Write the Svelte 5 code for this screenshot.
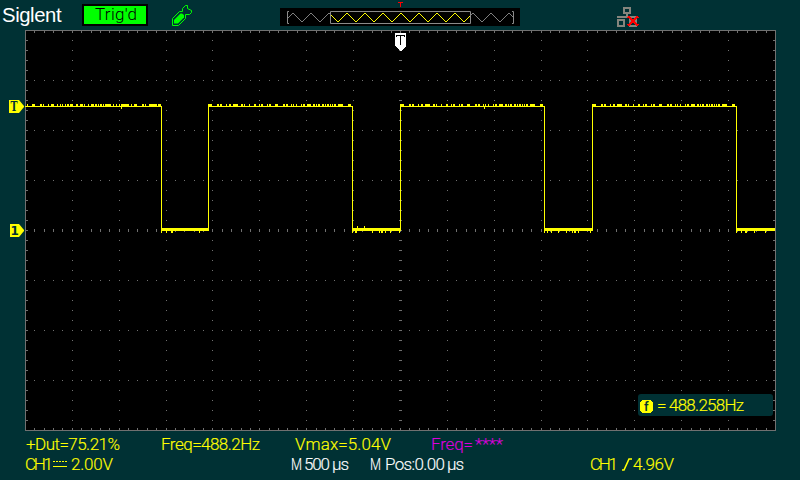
<script>
  const columns = 80;
  const at = (i) => Math.ceil(25 + i * 9.375 - 0.5) - 25;

  let dots = '';
  let ticks = '';
  const dot = (x, y) => `M${x} ${y}h1v1h-1z`;
  for (let i = 1; i < columns; i++) {
    const x = at(i);
    ticks += `M${x} 1h1v2h-1zM${x} 398h1v2h-1zM${x} 199h1v3h-1z`;
    for (let y = 50; y < 400; y += 50) if (y !== 200) dots += dot(x, y);
  }
  for (let y = 10; y < 400; y += 10) {
    ticks += `M1 ${y}h2v1h-2zM748 ${y}h2v1h-2zM374 ${y}h3v1h-3z`;
    for (let k = 1; k < 16; k++) dots += dot(at(k * 5), y);
  }

  // noise runs are [offset, length] pairs relative to the plot's left edge
  const first = [[2,1],[7,3],[15,2],[18,1],[23,1],[26,3],[32,1],[35,1],[37,1],[40,1],[42,2],[45,3],[51,2],[55,3],[59,1],[63,1],[66,3],[70,2],[73,1],[75,2],[78,1],[80,6],[88,1],[91,1],[94,1],[96,8],[106,1],[109,3],[117,2],[120,1],[124,8],[133,3]];
  const pulse = [[0,4],[9,2],[12,2],[18,1],[21,2],[25,5],[33,2],[36,1],[41,1],[46,2],[51,1],[53,2],[59,1],[61,2],[67,3],[75,2],[78,2],[83,1],[85,1],[88,1],[93,1],[95,2],[99,4],[105,2],[108,1],[110,2],[114,2],[117,1],[119,2],[122,1],[124,1],[126,2],[130,5],[140,3]];
  const noise = [...first, ...[183, 375, 567].flatMap((s) => pulse.map(([x, w]) => [s + x, w]))];
  const dips = [[136,1],[141,1],[146,2],[174,1],[327,1],[330,2],[347,1],[354,1],[356,2],[360,1],[365,1],[374,1],[519,1],[522,1],[526,1],[533,1],[541,1],[547,1],[549,2],[553,1],[565,1],[711,1],[716,1],[720,2],[729,1],[740,1]];
  const trace =
    [[0,137],[183,145],[375,145],[567,145]].map(([x, w]) => `M${x} 76h${w}v1h-${w}z`).join('') +
    [136,183,327,375,519,567,711].map((x) => `M${x} 76h1v124h-1z`).join('') +
    [[136,48],[327,49],[519,49],[711,39]].map(([x, w]) => `M${x} 198h${w}v3h-${w}z`).join('') +
    noise.map(([x, w]) => `M${x} 74h${w}v2h-${w}z`).join('') +
    dips.map(([x, w]) => `M${x} 201h${w}v2h-${w}z`).join('') +
    'M96 77h1v2h-1zM459 77h1v2h-1zM332 196h1v2h-1zM339 196h1v2h-1z';

  let wave = 'M288 18L293 13';
  for (let x = 302, low = true; x <= 510; x += 9, low = !low) wave += `L${x} ${low ? 22 : 13}`;
  wave += 'L513 17';

  const measures = [
    { gap: 26, w: 94, t: '+Dut=75.21%' },
    { gap: 41, w: 99, t: 'Freq=488.2Hz' },
    { gap: 35, w: 96, t: 'Vmax=5.04V' },
    { gap: 40, w: 42, t: 'Freq=', c: 'magenta' },
    { gap: 2, w: 28, t: '****', c: 'magenta' }
  ];
  const settings = [
    { gap: 25, w: 28, t: 'CH1' },
    { gap: 0, w: 14, icon: 'dc' },
    { gap: 4, w: 42, t: '2.00V' },
    { gap: 178, w: 11, t: 'M', c: 'white' },
    { gap: 2, w: 26, t: '500', c: 'white' },
    { gap: 2, w: 17, t: 'µs', c: 'white' },
    { gap: 21, w: 11, t: 'M', c: 'white' },
    { gap: 4, w: 60, t: 'Pos:0.00', c: 'white' },
    { gap: 2, w: 17, t: 'µs', c: 'white' },
    { gap: 126, w: 28, t: 'CH1' },
    { gap: 4, w: 11, icon: 'edge' },
    { gap: 0, w: 41, t: '4.96V' }
  ];
</script>

{#snippet row(items)}
  <div class="row">
    {#each items as item}
      <svg class="label {item.c ?? 'yellow'}" style:margin-left="{item.gap}px" width={item.w} height="20">
        {#if item.icon === 'dc'}
          <path d="M0 6.5H14" stroke="currentColor" stroke-dasharray="2 1" /><path d="M0 11.5H14" stroke="currentColor" />
        {:else if item.icon === 'edge'}
          <path d="M0 15h2L7 4h3" fill="none" stroke="currentColor" stroke-width="1.6" />
        {:else}
          <text x="0" y="15" textLength={item.w} lengthAdjust={item.t === 'M' ? 'spacingAndGlyphs' : 'spacing'}>{item.t}</text>
        {/if}
      </svg>
    {/each}
  </div>
{/snippet}

<main>
  <header>
    <div class="brand">Siglent</div>
    <div class="status"><svg width="62" height="18"><text x="11" y="14" textLength="42">Trig'd</text></svg></div>
    <svg class="usb" width="22" height="24" viewBox="171 4 22 24" fill="none" stroke="#00ff00">
      <path d="M172.5 25.5V18.5L179.5 11.5H182.5V8.5L185.5 5.5H187.5V8.5L191.5 10.5V12.5L189.5 14.5H185.5V18.5L178.5 25.5Z" />
      <path fill="#00ff00" stroke="none" d="M174 23.5V20L180.5 13.5H182L184 15V17.5L178 23.5Z" />
    </svg>
    <svg class="overview" width="240" height="26" viewBox="280 0 240 26">
      <path fill="#000" d="M280 8h240v18H280z" />
      <path d={wave} fill="none" stroke="#808080" shape-rendering="crispEdges" />
      <svg x="331" y="8" width="139" height="18" viewBox="331 8 139 18"><path d={wave} fill="none" stroke="#ffff00" stroke-width="1.1" shape-rendering="crispEdges" /></svg>
      <path d="M289 11.5h-1.5v12h1.5M512 11.5h1.5v12H512M330.5 11.5h140v12h-140z" fill="none" stroke="#8b8b8b" />
      <path fill="#ff0000" d="M398 2h5v1h-2v4h-1v-4h-2z" />
    </svg>
    <svg class="network" width="23" height="21" viewBox="617 7 23 21" shape-rendering="crispEdges">
      <path fill="none" stroke="#85857d" stroke-width="2" d="M624 8h6v5h-6zM618 20h6v6h-6zM630 20h6v6h-6zM617 17h19M627 13v4" />
      <path fill="none" stroke="#ff0000" stroke-width="2.2" d="M628 16.5l10 9M638 16.5l-10 9" />
    </svg>
  </header>

  <section>
    <div class="gutter">
      <svg class="level" width="16" height="14"><path fill="#ffff00" d="M0 0h10l5 6v1l-5 6H0z" /><text x="1.5" y="11" font-family="DejaVu Serif, serif" textLength="7" lengthAdjust="spacingAndGlyphs">T</text></svg>
      <svg class="ground" width="15" height="14"><path fill="#ffff00" d="M0 0h9l5 6v1l-5 6H0z" /><text x="0.5" y="11" font-family="DejaVu Sans, sans-serif">1</text></svg>
    </div>
    <div class="scope">
      <svg width="751" height="401" shape-rendering="crispEdges">
        <path fill="#000" d="M0 0h751v401H0z" />
        <path fill="#707070" d={dots} />
        <path fill="#707070" d={ticks} />
        <path fill="none" stroke="#707070" d="M.5 .5h750v400H.5z" />
        <path fill="#ffff00" d={trace} />
        <path fill="#fff" d="M370 3h11v13l-5 5h-1l-5-5z" />
        <path fill="#000" d="M371 5h9v2h-1v-1h-3v9h-1v-9h-3v1h-1z" />
      </svg>
      <div class="counter">
        <svg class="badge" width="14" height="14"><path fill="#ffff00" d="M2 0h9v1h1v1h1v9h-1v1h-1v1H2v-1H1v-1H0V2h1V1h1z" /><text class="f" x="4" y="11">f</text></svg>
        <svg width="90" height="20"><text x="0" y="16">=</text><text x="12" y="16" textLength="75">488.258Hz</text></svg>
      </div>
    </div>
  </section>

  <footer>
    {@render row(measures)}
    {@render row(settings)}
  </footer>
</main>

<style>
  :global(body) { margin: 0; background: #003134; }
  main { width: 800px; height: 480px; overflow: hidden; background: #003134; display: flex; flex-direction: column; font-family: Roboto, 'Liberation Sans', sans-serif; }
  svg { display: block; flex: none; }
  header { height: 30px; display: flex; align-items: flex-start; }
  .brand { width: 80px; padding-left: 2px; color: #fff; font: 20.3px/30px 'Liberation Sans', sans-serif; letter-spacing: -0.4px; }
  .status { margin-top: 4px; box-sizing: border-box; width: 66px; height: 22px; border: 2px solid #000; background: #00ff00; }
  .status svg { overflow: visible; font-size: 17px; font-weight: 300; }
  .usb { margin: 4px 0 0 23px; }
  .overview { margin-left: 87px; }
  .network { margin: 7px 0 0 97px; }
  section { height: 401px; display: flex; }
  .gutter { width: 25px; display: flex; flex-direction: column; align-items: flex-end; }
  .gutter text { font-size: 12px; font-weight: 700; fill: #003134; }
  .level { margin-top: 70px; }
  .ground { margin-top: 110px; }
  .scope { position: relative; width: 751px; height: 401px; }
  .counter { position: absolute; left: 613px; top: 364px; width: 135px; height: 22px; border-radius: 3px; background: #003134; display: flex; align-items: center; padding-left: 2px; gap: 3px; box-sizing: border-box; }
  .badge { margin-top: 4px; }
  .counter text { fill: #ffff00; font-size: 17px; font-weight: 300; stroke: #ffff00; stroke-width: 0.15px; }
  .counter .f { fill: #003134; stroke: none; font-size: 13px; font-weight: 500; }
  footer { padding-top: 4px; }
  .row { height: 20px; display: flex; }
  .label { overflow: visible; fill: currentColor; font-size: 17px; font-weight: 300; }
  .label text { stroke: currentColor; stroke-width: 0.15px; }
  .yellow { color: #ffff00; }
  .white { color: #fff; }
  .magenta { color: #dc00dc; }
</style>
